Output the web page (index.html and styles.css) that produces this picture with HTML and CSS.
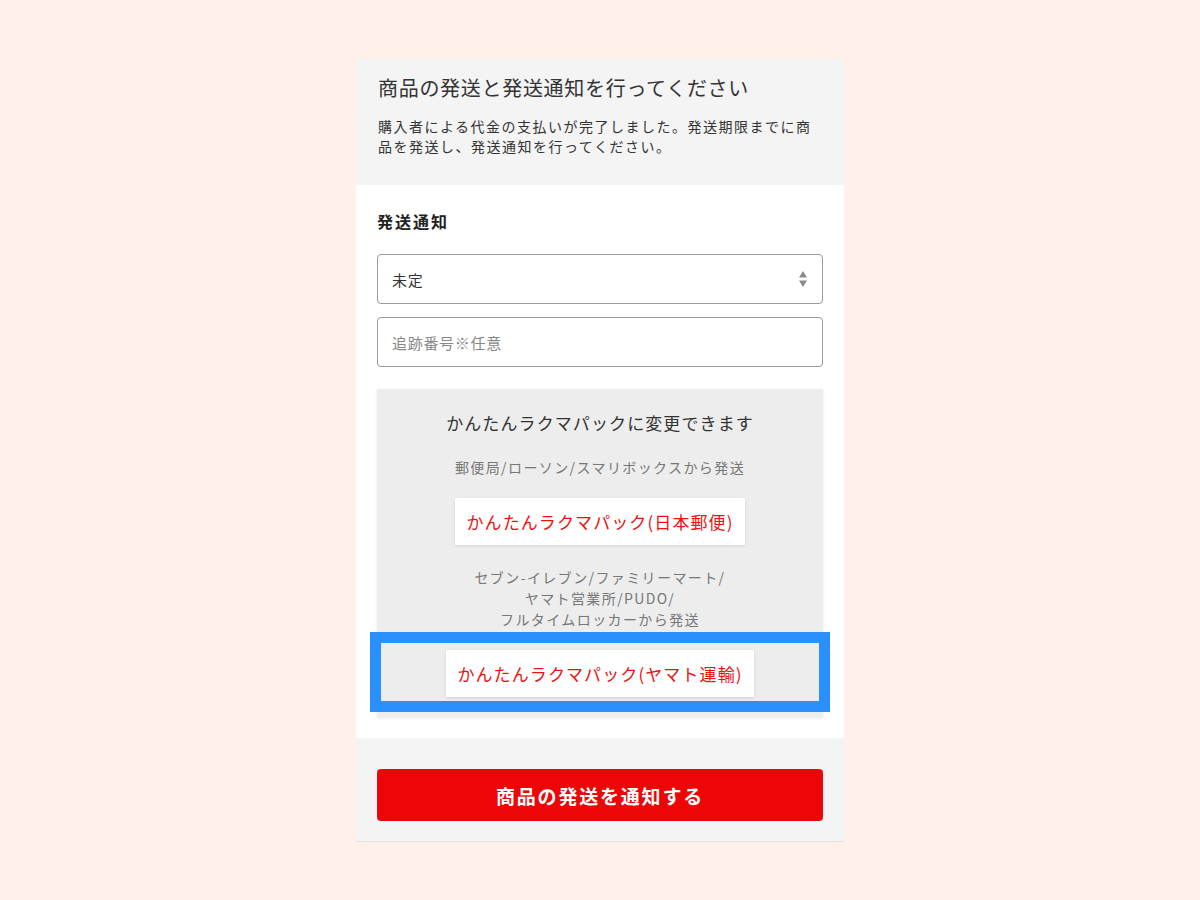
FILE: index.html
```html
<!DOCTYPE html>
<html>
<head>
    <meta charset="utf-8">
    <title>発送通知</title>
    <link rel="stylesheet" href="styles.css">
</head>
<body>
    <div class="card">
        <div class="card-head">
            <h1>商品の発送と発送通知を行ってください</h1>
            <p>購入者による代金の支払いが完了しました。発送期限までに商品を発送し、発送通知を行ってください。</p>
        </div>

        <div class="card-body">
            <h2>発送通知</h2>
            <div class="select-box">
                <span>未定</span>
                <svg class="arrows" width="10" height="18" viewBox="0 0 10 18">
                    <path d="M5 1 L9 7.5 L1 7.5 Z" fill="#8a8a8a"/>
                    <path d="M1 10.5 L9 10.5 L5 17 Z" fill="#8a8a8a"/>
                </svg>
            </div>
            <div class="text-input">追跡番号※任意</div>

            <div class="pack-box">
                <div class="pack-title">かんたんラクマパックに変更できます</div>
                <div class="pack-note">郵便局/ローソン/スマリボックスから発送</div>
                <div class="pack-btn">かんたんラクマパック(日本郵便)</div>
                <div class="pack-note">セブン-イレブン/ファミリーマート/<br>ヤマト営業所/PUDO/<br>フルタイムロッカーから発送</div>
                <div class="pack-btn">かんたんラクマパック(ヤマト運輸)</div>
                <div class="highlight"></div>
            </div>
        </div>

        <div class="card-foot">
            <button class="submit-btn">商品の発送を通知する</button>
        </div>
    </div>
</body>
</html>
```

FILE: styles.css
```css
body {
    margin: 0;
    padding: 0;
    background-color: #fff0e9;
    font-family: "Noto Sans CJK JP", "Noto Sans", sans-serif;
    color: #333;
}

.card {
    width: 488px;
    margin: 59px auto 0;
    border-bottom: 1px solid #e2e2e2;
}

.card-head {
    background-color: #f4f4f4;
    padding: 15px 22px 29px;
}

.card-head h1 {
    margin: 0;
    font-size: 20px;
    font-weight: normal;
    line-height: 28px;
    letter-spacing: 0.7px;
    color: #333;
}

.card-head p {
    margin: 14px 0 0;
    font-size: 14px;
    line-height: 20px;
    letter-spacing: 1.5px;
    color: #333;
}

.card-body {
    background-color: #fff;
    padding: 24px 21px 21px;
}

.card-body h2 {
    margin: 0 0 21px;
    font-size: 16px;
    line-height: 24px;
    letter-spacing: 2px;
    font-weight: bold;
    color: #222;
}

.select-box,
.text-input {
    height: 48px;
    border: 1px solid #9a9a9a;
    border-radius: 4px;
    padding: 0 14px;
    display: flex;
    align-items: center;
    justify-content: space-between;
    font-size: 15px;
    letter-spacing: 0.7px;
}

.select-box {
    color: #333;
}

.text-input {
    margin-top: 13px;
    color: #888;
}

.pack-box {
    position: relative;
    margin-top: 22px;
    background-color: #ededed;
    box-shadow: 0 1px 3px rgba(0, 0, 0, 0.1);
    padding: 22px 0 20px;
    display: flex;
    flex-direction: column;
    align-items: center;
    text-align: center;
}

.pack-title {
    font-size: 17px;
    line-height: 24px;
    letter-spacing: 1.1px;
    color: #333;
}

.pack-note {
    margin-top: 22px;
    font-size: 14px;
    line-height: 21px;
    letter-spacing: 1.4px;
    color: #777;
}

.pack-btn {
    margin-top: 21px;
    height: 47px;
    padding: 0 11px;
    display: flex;
    align-items: center;
    background-color: #fff;
    color: #ee1111;
    font-size: 17px;
    letter-spacing: 1.1px;
    box-shadow: 0 1px 3px rgba(0, 0, 0, 0.12);
}

.pack-note + .pack-btn {
    margin-top: 20px;
}

.highlight {
    position: absolute;
    left: -7px;
    right: -7px;
    bottom: 5px;
    height: 58px;
    border: 11px solid #2b90ff;
}

.card-foot {
    background-color: #f4f4f4;
    padding: 31px 21px 20px;
}

.submit-btn {
    display: block;
    width: 100%;
    height: 52px;
    border: none;
    border-radius: 4px;
    background-color: #ec0606;
    color: #fff;
    font-family: "Noto Sans CJK JP", "Noto Sans", sans-serif;
    font-size: 19px;
    font-weight: bold;
    letter-spacing: 1.8px;
}
```
